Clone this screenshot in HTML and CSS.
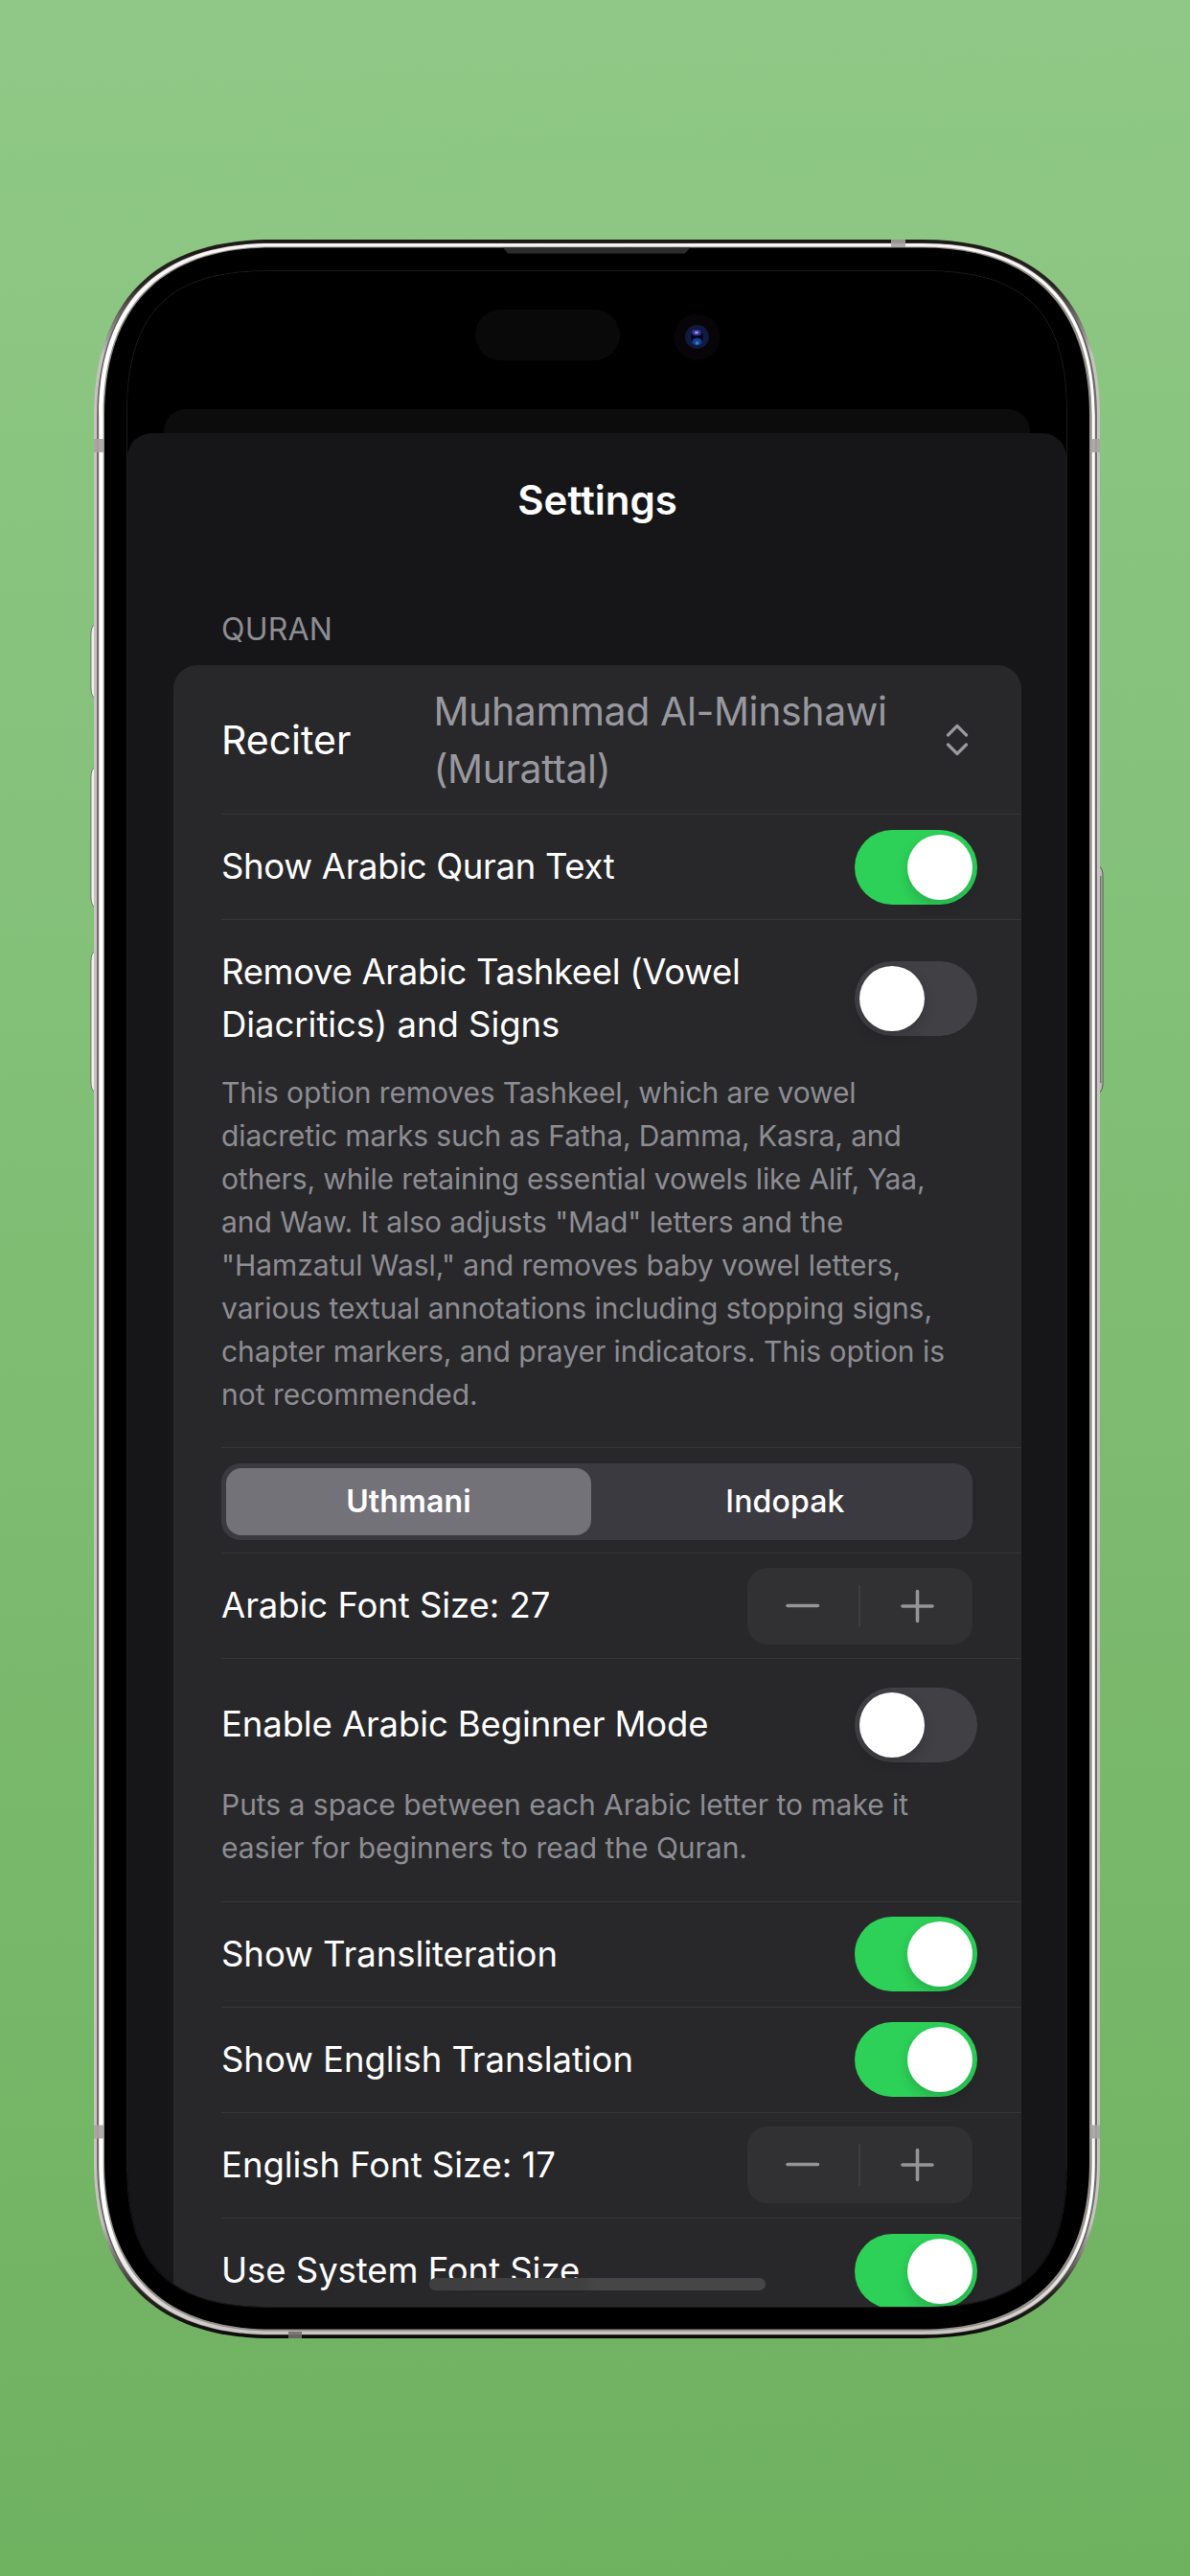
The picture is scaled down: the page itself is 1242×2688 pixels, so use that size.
FILE: index.html
```html
<!DOCTYPE html>
<html lang="en">
<head>
<meta charset="utf-8">
<title>Settings</title>
<link rel="stylesheet" href="styles.css">
</head>
<body>
<main class="stage">
  <div class="phone">
    <svg class="frame" viewBox="-4 0 1058 2190" width="1058" height="2190" aria-hidden="true">
      <defs>
        <linearGradient id="rim" x1="0" y1="0" x2="0" y2="1">
          <stop offset="0" stop-color="#1b1917"/><stop offset=".022" stop-color="#26231f"/>
          <stop offset=".055" stop-color="#c6c3c0"/><stop offset=".945" stop-color="#c6c3c0"/>
          <stop offset=".978" stop-color="#26231f"/><stop offset="1" stop-color="#0c0b0a"/>
        </linearGradient>
        <linearGradient id="groove" x1="0" y1="0" x2="0" y2="1">
          <stop offset="0" stop-color="#4a4846"/><stop offset=".06" stop-color="#6f6d6a"/>
          <stop offset=".94" stop-color="#6f6d6a"/><stop offset="1" stop-color="#4a4846"/>
        </linearGradient>
        <linearGradient id="shine" x1="0" y1="0" x2="0" y2="1">
          <stop offset="0" stop-color="#f6f3f1"/><stop offset=".05" stop-color="#fff"/>
          <stop offset=".95" stop-color="#fff"/><stop offset="1" stop-color="#c9c4c1"/>
        </linearGradient>
      </defs>
      <g fill="#f0eeec" stroke="#4b4148" stroke-width=".6">
        <path d="M1 401 Q-3 404 -3 412 V467 Q-3 476 1 479Z"/>
        <path d="M1 550 Q-3 553 -3 561 V686 Q-3 694 1 697Z"/>
        <path d="M1 742 Q-3 745 -3 753 V879 Q-3 887 1 890Z"/>
      </g>
      <path d="M1048.5 653 Q1053 656 1053 664 V880 Q1053 888 1048.5 891Z" fill="#bcb8b4" stroke="#1c1c1c" stroke-width=".6"/>
      <path d="M1050.8 664V880" stroke="#555" stroke-width="1"/>
      <path fill="url(#rim)" d="M0,185 c0,-121 64,-185 185,-185 h680 c121,0 185,64 185,185 v1820 c0,121 -64,185 -185,185 h-680 c-121,0 -185,-64 -185,-185z"/>
      <path fill="url(#groove)" d="M3,185.5 c0,-119 63,-182 182,-182 h680 c119,0 182,63 182,182 v1819 c0,119 -63,182 -182,182 h-680 c-119,0 -182,-63 -182,-182z"/>
      <path fill="url(#shine)" d="M5.2,184 c0,-118 62,-180 180,-180 h679.6 c118,0 180,62 180,180 v1822 c0,118 -62,180 -180,180 h-679.6 c-118,0 -180,-62 -180,-180z"/>
      <path fill="#94908c" d="M9.7,183.6 c0,-115 61,-176 176,-176 h680 c115,0 176,61 176,176 v1822.8 c0,115 -61,176 -176,176 h-680 c-115,0 -176,-61 -176,-176z"/>
      <path fill="#000" d="M11,183.5 c0,-114 61,-175 175,-175 h678 c114,0 175,61 175,175 v1822 c0,114 -61,175 -175,175 h-678 c-114,0 -175,-61 -175,-175z"/>
      <g fill="#a5a3a1" fill-opacity=".9">
        <path d="M832 0h15v8h-15zM0 208h10v14h-10zM1040 208h10v14h-10zM0 1967.500h10v14h-10zM1040 1967.500h10v14h-10z"/>
        <path fill="#72706e" d="M203 2183h14v7h-14z"/>
      </g>
      <path fill="#2c2c2c" d="M427 8.500h195l-5 6h-185z"/>
      <path fill="none" stroke="#1c1c1c" stroke-width="1" d="M34.500,182.500 c0,-107 43,-150 150,-150 h681 c107,0 150,43 150,150 v1825 c0,107 -43,150 -150,150 h-681 c-107,0 -150,-43 -150,-150z"/>
    </svg>

    <div class="screen">
      <div class="status">
        <div class="island">
          <span class="pill"></span>
          <svg class="camera" viewBox="0 0 49 49" width="49" height="49" aria-hidden="true">
            <circle cx="24.500" cy="24.500" r="24" fill="#070508"/>
            <circle cx="24.500" cy="24.500" r="12.500" fill="#13193a"/>
            <circle cx="24.500" cy="24.500" r="9.500" fill="#0b1f4e"/>
            <ellipse cx="24.500" cy="24.500" rx="6.500" ry="8.500" fill="#050518"/>
            <ellipse cx="24" cy="20" rx="4.800" ry="3.200" fill="#3b3794"/>
            <ellipse cx="24" cy="20" rx="2" ry="1.200" fill="#9c9ae8"/>
            <ellipse cx="24.500" cy="29.500" rx="5" ry="3.800" fill="#12419a"/>
            <circle cx="24.500" cy="31" r="1.800" fill="#3f8196"/>
          </svg>
        </div>
        <div class="peek"></div>
      </div>

      <section class="sheet">
        <h1 class="title">Settings</h1>
        <h2 class="section-label">QURAN</h2>
        <div class="card">
          <div class="row reciter">
            <span class="name">Reciter</span>
            <span class="value">Muhammad Al-Minshawi<br>(Murattal)</span>
            <svg class="chevrons" viewBox="0 0 24 34" width="24" height="34" aria-hidden="true"><path d="M2.500 12 12 2.500 21.500 12M2.500 22 12 31.500 21.500 22"/></svg>
          </div>
          <div class="row"><span class="label tight">Show Arabic Quran Text</span><span class="toggle on"></span></div>
          <div class="row stacked tashkeel">
            <div class="line"><span class="label"><span class="tight">Remove Arabic Tashkeel (Vowel</span><br>Diacritics) and Signs</span><span class="toggle"></span></div>
            <p class="note"><span class="snug">This option removes Tashkeel, which are vowel<br>diacretic marks such as Fatha, Damma, Kasra, and<br>others, while retaining essential vowels like Alif, Yaa,</span><br>and Waw. It also adjusts "Mad" letters and the<br>"Hamzatul Wasl," and removes baby vowel letters,<br>various textual annotations including stopping signs,<br>chapter markers, and prayer indicators. This option is<br>not recommended.</p>
          </div>
          <div class="row">
            <div class="segmented"><span class="segment selected">Uthmani</span><span class="segment">Indopak</span></div>
          </div>
          <div class="row"><span class="label">Arabic Font Size: 27</span>
            <span class="stepper"><svg viewBox="0 0 235 80" width="235" height="80"><path class="divider" d="M117 18V62"/><path class="sign" d="M42 39.500H73.500M162 40H193M177.500 24.500V55.500"/></svg></span></div>
          <div class="row stacked beginner">
            <div class="line"><span class="label snug">Enable Arabic Beginner Mode</span><span class="toggle"></span></div>
            <p class="note">Puts a space between each Arabic letter to make it<br>easier for beginners to read the Quran.</p>
          </div>
          <div class="row"><span class="label">Show Transliteration</span><span class="toggle on"></span></div>
          <div class="row"><span class="label">Show English Translation</span><span class="toggle on"></span></div>
          <div class="row"><span class="label">English Font Size: 17</span>
            <span class="stepper"><svg viewBox="0 0 235 80" width="235" height="80"><path class="divider" d="M117 18V62"/><path class="sign" d="M42 39.500H73.500M162 40H193M177.500 24.500V55.500"/></svg></span></div>
          <div class="row"><span class="label">Use System Font Size</span><span class="toggle on"></span></div>
        </div>
      </section>
      <div class="home-indicator"></div>
    </div>
  </div>
</main>
</body>
</html>
```

FILE: styles.css
```css
* { box-sizing: border-box; }

body {
  margin: 0;
  font-family: Inter, "Liberation Sans", sans-serif;
  color: #fff;
}

.stage {
  height: 2688px;
  padding: 249.5px 0 0 98px;
  background: linear-gradient(178deg, #90c987, #6eb15f);
  overflow: hidden;
}

.phone {
  position: relative;
  width: 1050px;
  height: 2190px;
  padding: 33.5px 35px 0;
}

.frame {
  position: absolute;
  left: -4px;
  top: 0;
}

/* continuous-curvature corners of the display */
.screen {
  position: relative;
  width: 980px;
  height: 2124px;
  background: #000;
  clip-path: path("M0,150 c0,-107 43,-150 150,-150 h680 c107,0 150,43 150,150 v1824 c0,107 -43,150 -150,150 h-680 c-107,0 -150,-43 -150,-150z");
}

.status {
  display: flex;
  flex-direction: column;
  justify-content: space-between;
  height: 169px;
  padding-top: 40px;
}

.island {
  display: flex;
  align-items: center;
  gap: 56px;
  padding-left: 363px;
}

.pill {
  width: 151px;
  height: 53px;
  border-radius: 27px;
  background: #090909;
}

.camera { margin-top: 4px; }

.peek {
  height: 25px;
  margin: 0 38px;
  border-radius: 23px 23px 0 0;
  background: #0c0c0c;
}

.sheet {
  height: 1955px;
  padding: 0 47px 0 48px;
  border-radius: 25px 25px 0 0;
  background: #161618;
  overflow: hidden;
}

.title {
  margin: 0;
  font-size: 42px;
  font-weight: 600;
  line-height: 140px;
  text-align: center;
}

.section-label {
  margin: 45px 0 17px 50px;
  font-size: 32px;
  font-weight: 400;
  line-height: 40px;
  letter-spacing: .2px;
  color: #8d8d93;
}

.card {
  border-radius: 25px;
  background: #28282a;
  padding-left: 50px;
}

.row {
  display: flex;
  align-items: center;
  justify-content: space-between;
  height: 110px;
  padding-right: 46px;
  border-bottom: 1.500px solid #363638;
}

.row:last-child { border-bottom: 0; }

.reciter { height: 156px; }

.name, .value {
  font-size: 41px;
  line-height: 60px;
}

.value {
  flex: 1;
  padding-left: 86px;
  letter-spacing: -.38px;
  color: #98989f;
}

.chevrons {
  margin-right: 9px;
  fill: none;
  stroke: #98989f;
  stroke-width: 3.200;
  stroke-linecap: round;
  stroke-linejoin: round;
}

.label {
  font-size: 36.5px;
  line-height: 55px;
  letter-spacing: -.05px;
}

.tight { letter-spacing: -.32px; }
.snug { letter-spacing: -.12px; }

.stacked {
  flex-direction: column;
  align-items: stretch;
  justify-content: flex-start;
}

.tashkeel { height: 551px; padding-top: 27px; }
.beginner { height: 253.5px; padding-top: 29.5px; }

.line {
  display: flex;
  align-items: center;
  justify-content: space-between;
}

.note {
  margin: 20.5px 0 0;
  font-size: 30px;
  line-height: 45px;
  letter-spacing: -.02px;
  color: #8d8d93;
}

.beginner .note { margin-top: 22.5px; }

.toggle {
  display: flex;
  flex: none;
  width: 128px;
  height: 78px;
  padding: 5px;
  border-radius: 39px;
  background: #414045;
}

.toggle::before {
  content: "";
  width: 68px;
  height: 68px;
  border-radius: 50%;
  background: #fff;
  box-shadow: 0 6px 14px rgba(0, 0, 0, .16);
}

.toggle.on {
  justify-content: flex-end;
  background: #2dd158;
}

.segmented {
  display: flex;
  width: 784px;
  height: 80px;
  margin-top: 3px;
  padding: 5px;
  border-radius: 20px;
  background: #3b3a40;
}

.segment {
  flex: 1;
  padding-left: 12px;
  font-size: 32px;
  font-weight: 500;
  line-height: 70px;
  letter-spacing: .15px;
  text-align: center;
}

.segment.selected {
  flex: 0 0 381px;
  padding-left: 0;
  border-radius: 16px;
  background: #737278;
  font-weight: 600;
}

.stepper {
  height: 80px;
  margin-right: 5px;
  border-radius: 21px;
  background: #313133;
}

.stepper svg { display: block; fill: none; }
.divider { stroke: #3d3d40; stroke-width: 2; }
.sign { stroke: #959597; stroke-width: 3.600; stroke-linecap: round; }

.home-indicator {
  position: absolute;
  left: 315px;
  top: 2094px;
  width: 351px;
  height: 13px;
  border-radius: 7px;
  background: linear-gradient(90deg, #3f3f40, #404041 45%, #464647 50%);
}
```
